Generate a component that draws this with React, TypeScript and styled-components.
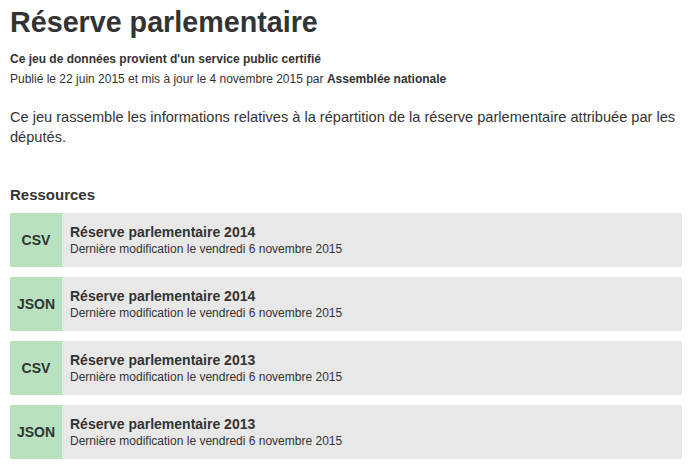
import React from "react";
import styled, { createGlobalStyle } from "styled-components";

const GlobalStyle = createGlobalStyle`
  body {
    margin: 0;
    background: #fff;
    font-family: "Liberation Sans", Arial, Helvetica, sans-serif;
    color: #333;
  }
`;

const Page = styled.div`
  padding: 4px 11px 0 10px;
`;

const Title = styled.h1`
  margin: 0;
  font-size: 28.7px;
  font-weight: bold;
  line-height: 36px;
  color: #333;
`;

const Certified = styled.p`
  margin: 10px 0 0;
  font-size: 12px;
  font-weight: bold;
  line-height: 18px;
`;

const Meta = styled.p`
  margin: 2px 0 0;
  font-size: 12px;
  line-height: 18px;
`;

const Description = styled.p`
  margin: 19px 0 0;
  font-size: 14.6px;
  line-height: 20px;
`;

const SectionTitle = styled.h3`
  margin: 38px 0 0;
  font-size: 15px;
  font-weight: bold;
  line-height: 20px;
`;

const ResourceList = styled.div`
  display: flex;
  flex-direction: column;
  gap: 10px;
  margin-top: 8px;
`;

const Resource = styled.div`
  display: flex;
  height: 54px;
  background: #e8e8e8;
`;

const Format = styled.div`
  width: 52px;
  flex-shrink: 0;
  display: flex;
  align-items: center;
  justify-content: center;
  background: #b8e1c0;
  font-size: 14px;
  font-weight: bold;
  color: #333;
`;

const Info = styled.div`
  display: flex;
  flex-direction: column;
  justify-content: center;
  padding-left: 8px;
`;

const ResourceTitle = styled.div`
  font-size: 14px;
  font-weight: bold;
  line-height: 18px;
`;

const ResourceDate = styled.div`
  font-size: 12px;
  line-height: 16px;
`;

const resources = [
  { format: "CSV", title: "Réserve parlementaire 2014" },
  { format: "JSON", title: "Réserve parlementaire 2014" },
  { format: "CSV", title: "Réserve parlementaire 2013" },
  { format: "JSON", title: "Réserve parlementaire 2013" },
];

export default function App() {
  return (
    <>
      <GlobalStyle />
      <Page>
        <Title>Réserve parlementaire</Title>
        <Certified>Ce jeu de données provient d'un service public certifié</Certified>
        <Meta>
          Publié le 22 juin 2015 et mis à jour le 4 novembre 2015 par{" "}
          <strong>Assemblée nationale</strong>
        </Meta>
        <Description>
          Ce jeu rassemble les informations relatives à la répartition de la
          réserve parlementaire attribuée par les députés.
        </Description>
        <SectionTitle>Ressources</SectionTitle>
        <ResourceList>
          {resources.map((r, i) => (
            <Resource key={i}>
              <Format>{r.format}</Format>
              <Info>
                <ResourceTitle>{r.title}</ResourceTitle>
                <ResourceDate>Dernière modification le vendredi 6 novembre 2015</ResourceDate>
              </Info>
            </Resource>
          ))}
        </ResourceList>
      </Page>
    </>
  );
}
